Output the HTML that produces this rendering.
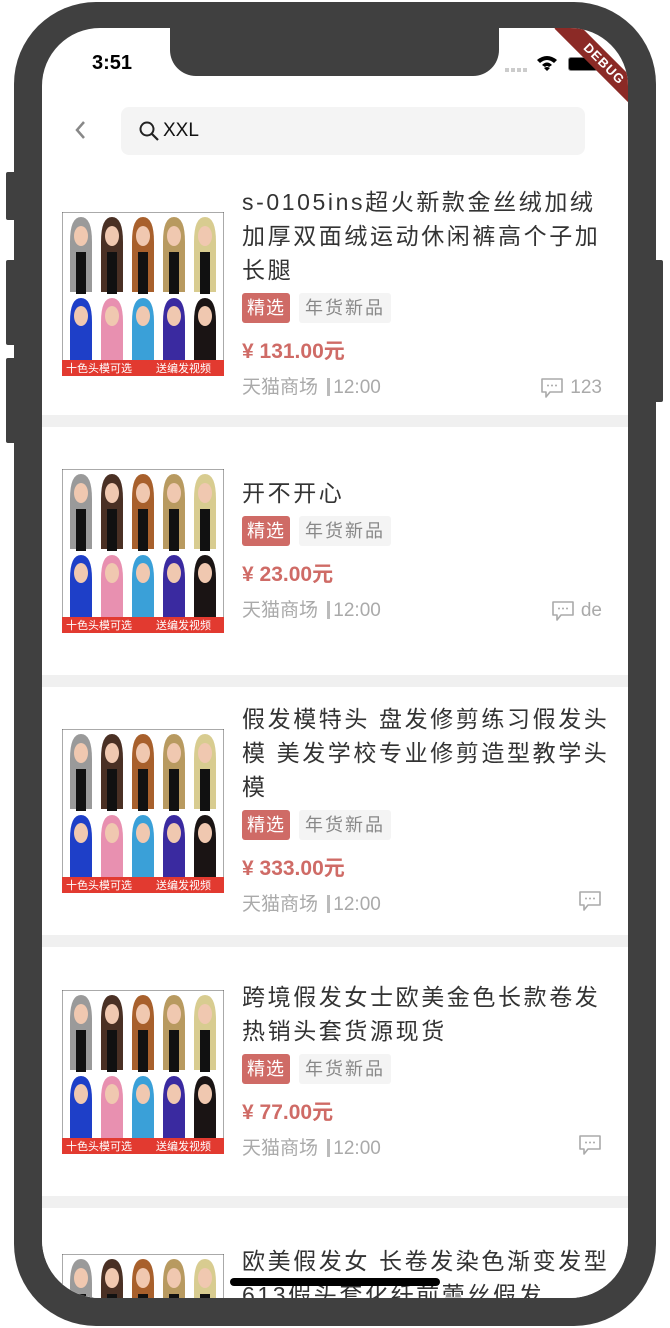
<!DOCTYPE html>
<html><head><meta charset="utf-8"><style>
*{margin:0;padding:0;box-sizing:border-box}
body{width:670px;height:1328px;background:#fff;position:relative;overflow:hidden;font-family:"Liberation Sans","Noto Sans CJK SC",sans-serif}
.btn{position:absolute;background:#404040;border-radius:2px}
.body{position:absolute;left:14px;top:2px;width:642px;height:1324px;background:#404040;border-radius:82px}
.screen{position:absolute;left:42px;top:28px;width:586px;height:1270px;background:#fff;border-radius:58px;overflow:hidden}
.notch{position:absolute;left:128px;top:-2px;width:329px;height:50px;background:#404040;border-radius:0 0 26px 26px}
.time{position:absolute;left:50px;top:24px;font-size:20px;font-weight:bold;color:#000}
.search{position:absolute;left:79px;top:79px;width:464px;height:48px;background:#f4f4f4;border-radius:8px}
.search span{position:absolute;left:42px;top:13px;font-size:19px;color:#111}
.list{position:absolute;left:0;top:144px;width:586px}
.card{height:248px;display:flex;align-items:center;background:#fff;border-bottom:12px solid #f0f0f0;position:relative}
.card svg.img{position:absolute;left:20px;top:50%;margin-top:-82px}
.txt{margin-left:200px;width:374px}
.title{font-size:23px;line-height:34px;color:#333;letter-spacing:2.6px}
.tags{margin-top:6px;height:30px}
.t1{display:inline-block;background:#cf6b66;color:#fff;font-size:18px;height:30px;line-height:30px;padding:0 5px;border-radius:3px;letter-spacing:1px}
.t2{display:inline-block;background:#f4f4f4;color:#888;font-size:18px;height:30px;line-height:30px;padding:0 6px;border-radius:3px;margin-left:9px;letter-spacing:2px}
.price{color:#cf6b66;font-size:21px;font-weight:bold;margin-top:14px;height:30px;line-height:30px}
.meta{color:#aaa;font-size:19px;margin-top:6px;height:30px;line-height:30px;position:relative}
.meta b{display:inline-block;width:3px;height:18px;background:#bbb;vertical-align:-3px;margin:0 3px 0 4px}
.meta .r{position:absolute;right:14px;top:0;display:flex;align-items:center;gap:6px}
</style></head><body>
<svg width="0" height="0" style="position:absolute"><defs>
<symbol id="wig" viewBox="0 0 162 164">
<rect x="0" y="0" width="162" height="164" fill="#fff" stroke="#555" stroke-width="1"/>
<g>
<path d="M8 30 Q8 5 19 5 Q30 5 30 30 L30 80 L8 80Z" fill="#9a9a9a"/><ellipse cx="19" cy="24" rx="7" ry="10" fill="#f0c8b0"/><rect x="14" y="40" width="10" height="42" fill="#111"/>
<path d="M39 30 Q39 5 50 5 Q61 5 61 30 L61 80 L39 80Z" fill="#4a3024"/><ellipse cx="50" cy="24" rx="7" ry="10" fill="#f0c8b0"/><rect x="45" y="40" width="10" height="42" fill="#111"/>
<path d="M70 30 Q70 5 81 5 Q92 5 92 30 L92 80 L70 80Z" fill="#a8602c"/><ellipse cx="81" cy="24" rx="7" ry="10" fill="#f0c8b0"/><rect x="76" y="40" width="10" height="42" fill="#111"/>
<path d="M101 30 Q101 5 112 5 Q123 5 123 30 L123 80 L101 80Z" fill="#b89a60"/><ellipse cx="112" cy="24" rx="7" ry="10" fill="#f0c8b0"/><rect x="107" y="40" width="10" height="42" fill="#111"/>
<path d="M132 30 Q132 5 143 5 Q154 5 154 30 L154 80 L132 80Z" fill="#d8cc90"/><ellipse cx="143" cy="24" rx="7" ry="10" fill="#f0c8b0"/><rect x="138" y="40" width="10" height="42" fill="#111"/>
<path d="M8 110 Q8 86 19 86 Q30 86 30 110 L30 148 L8 148Z" fill="#1e3fc8"/><ellipse cx="19" cy="104" rx="7" ry="10" fill="#f0c8b0"/>
<path d="M39 110 Q39 86 50 86 Q61 86 61 110 L61 148 L39 148Z" fill="#e890b0"/><ellipse cx="50" cy="104" rx="7" ry="10" fill="#f0c8b0"/>
<path d="M70 110 Q70 86 81 86 Q92 86 92 110 L92 148 L70 148Z" fill="#3aa0d8"/><ellipse cx="81" cy="104" rx="7" ry="10" fill="#f0c8b0"/>
<path d="M101 110 Q101 86 112 86 Q123 86 123 110 L123 148 L101 148Z" fill="#3a2aa0"/><ellipse cx="112" cy="104" rx="7" ry="10" fill="#f0c8b0"/>
<path d="M132 110 Q132 86 143 86 Q154 86 154 110 L154 148 L132 148Z" fill="#1a1414"/><ellipse cx="143" cy="104" rx="7" ry="10" fill="#f0c8b0"/>
</g>
<rect x="0" y="148" width="162" height="16" fill="#e23a30"/>
</symbol>
<symbol id="cm" viewBox="0 0 24 22"><path d="M2 2 H22 V15 H10 L6 20 V15 H2Z" fill="none" stroke="#aaa" stroke-width="1.6" stroke-linejoin="round"/><circle cx="8" cy="8.5" r="1" fill="#aaa"/><circle cx="12" cy="8.5" r="1" fill="#aaa"/><circle cx="16" cy="8.5" r="1" fill="#aaa"/></symbol>
</defs></svg>
<div class="btn" style="left:6px;top:172px;width:10px;height:48px"></div>
<div class="btn" style="left:6px;top:260px;width:10px;height:85px"></div>
<div class="btn" style="left:6px;top:358px;width:10px;height:85px"></div>
<div class="btn" style="left:654px;top:260px;width:9px;height:142px"></div>
<div class="body"></div>
<div class="screen">
<div class="list">
<div class="card" style="height:255px"><svg class="img" width="162" height="164"><use href="#wig"/><text x="4" y="160" font-size="11" fill="#fff" font-family="Noto Sans CJK SC">十色头模可选</text><text x="94" y="160" font-size="11" fill="#fff" font-family="Noto Sans CJK SC">送编发视频</text></svg>
<div class="txt"><div class="title">s-0105ins超火新款金丝绒加绒加厚双面绒运动休闲裤高个子加长腿</div><div class="tags"><span class="t1">精选</span><span class="t2">年货新品</span></div><div class="price">¥ 131.00元</div><div class="meta">天猫商场 <b></b>12:00<span class="r"><svg width="24" height="22"><use href="#cm"/></svg>123</span></div></div></div>
<div class="card" style="height:260px"><svg class="img" width="162" height="164"><use href="#wig"/><text x="4" y="160" font-size="11" fill="#fff" font-family="Noto Sans CJK SC">十色头模可选</text><text x="94" y="160" font-size="11" fill="#fff" font-family="Noto Sans CJK SC">送编发视频</text></svg>
<div class="txt"><div class="title">开不开心</div><div class="tags"><span class="t1">精选</span><span class="t2">年货新品</span></div><div class="price">¥ 23.00元</div><div class="meta">天猫商场 <b></b>12:00<span class="r"><svg width="24" height="22"><use href="#cm"/></svg>de</span></div></div></div>
<div class="card" style="height:260px"><svg class="img" width="162" height="164"><use href="#wig"/><text x="4" y="160" font-size="11" fill="#fff" font-family="Noto Sans CJK SC">十色头模可选</text><text x="94" y="160" font-size="11" fill="#fff" font-family="Noto Sans CJK SC">送编发视频</text></svg>
<div class="txt"><div class="title">假发模特头 盘发修剪练习假发头模 美发学校专业修剪造型教学头模</div><div class="tags"><span class="t1">精选</span><span class="t2">年货新品</span></div><div class="price">¥ 333.00元</div><div class="meta">天猫商场 <b></b>12:00<span class="r"><svg width="24" height="22"><use href="#cm"/></svg></span></div></div></div>
<div class="card" style="height:261px"><svg class="img" width="162" height="164"><use href="#wig"/><text x="4" y="160" font-size="11" fill="#fff" font-family="Noto Sans CJK SC">十色头模可选</text><text x="94" y="160" font-size="11" fill="#fff" font-family="Noto Sans CJK SC">送编发视频</text></svg>
<div class="txt"><div class="title">跨境假发女士欧美金色长款卷发热销头套货源现货</div><div class="tags"><span class="t1">精选</span><span class="t2">年货新品</span></div><div class="price">¥ 77.00元</div><div class="meta">天猫商场 <b></b>12:00<span class="r"><svg width="24" height="22"><use href="#cm"/></svg></span></div></div></div>
<div class="card" style="height:200px;align-items:flex-start;border:none"><svg class="img" width="162" height="164" style="top:46px;margin-top:0"><use href="#wig"/></svg>
<div class="txt" style="margin-top:36px"><div class="title">欧美假发女 长卷发染色渐变发型613假头套化纤前蕾丝假发</div></div></div>
</div>
<div class="notch"></div>
<div class="time">3:51</div>
<div style="position:absolute;left:463px;top:40px;display:flex;gap:2px"><i style="width:4px;height:4px;background:#ccc;display:block"></i><i style="width:4px;height:4px;background:#ccc;display:block"></i><i style="width:4px;height:4px;background:#ccc;display:block"></i><i style="width:4px;height:4px;background:#ccc;display:block"></i></div>
<svg style="position:absolute;left:494px;top:27px" width="22" height="16" viewBox="0 0 22 16"><path d="M1 5 Q11 -3 21 5 L18 8 Q11 2 4 8Z M6 10 Q11 5 16 10 L13 12 Q11 10 9 12Z M11 16 L8 13 Q11 11 14 13Z" fill="#000"/></svg>
<div style="position:absolute;left:526px;top:29px;width:30px;height:14px;background:#000;border-radius:3px;border:1px solid #888"></div>
<div style="position:absolute;left:502px;top:26px;width:120px;height:20px;background:#8b2a26;transform:rotate(45deg);color:#fff;font-size:13px;font-weight:bold;text-align:center;line-height:20px;letter-spacing:1px">DEBUG</div>
<svg style="position:absolute;left:30px;top:91px" width="16" height="22" viewBox="0 0 16 22"><path d="M12 3 L5 11 L12 19" fill="none" stroke="#888" stroke-width="2.5"/></svg>
<div class="search"><svg style="position:absolute;left:17px;top:13px" width="22" height="22" viewBox="0 0 22 22"><circle cx="9" cy="9" r="6.5" fill="none" stroke="#222" stroke-width="2"/><path d="M14 14 L20 20" stroke="#222" stroke-width="2.2"/></svg><span>XXL</span></div>
<div style="position:absolute;left:188px;top:1250px;width:210px;height:8px;background:#000;border-radius:4px"></div>
</div>
</body></html>
